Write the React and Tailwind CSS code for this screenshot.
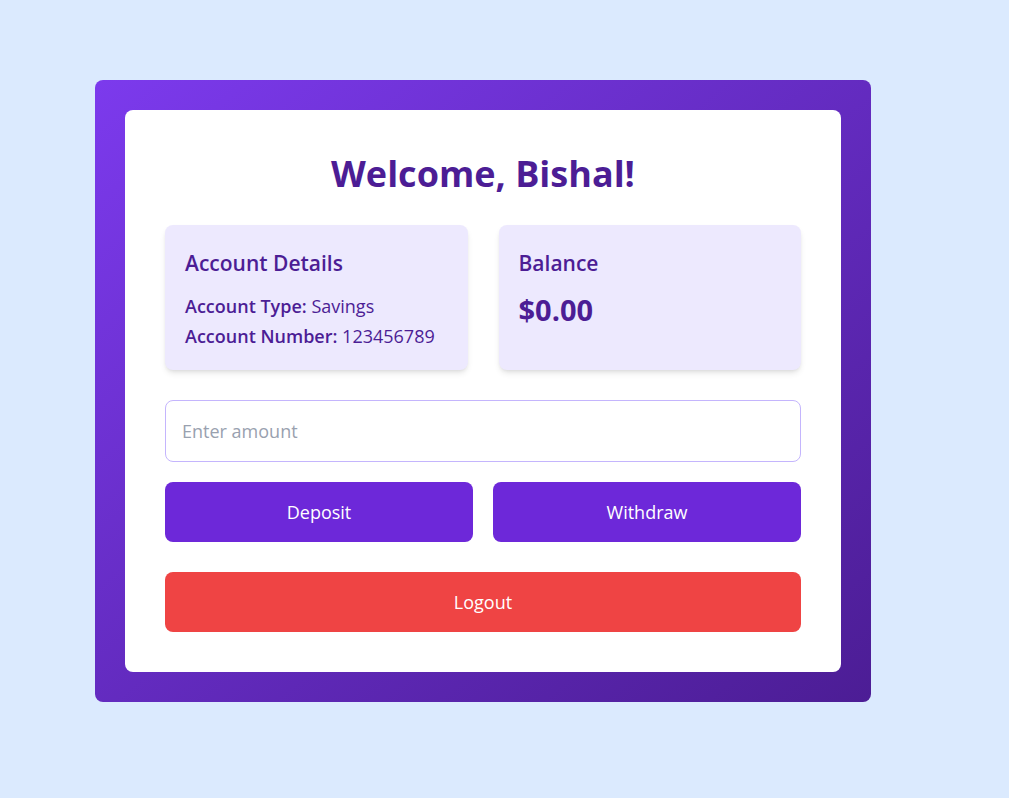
import React, { useState } from 'react';

const App = () => {
  const [amount, setAmount] = useState('');
  const balance = 0;

  return (
    <div className="min-h-screen bg-[#dbeafe] pt-[80px] pl-[95px]" style={{ fontFamily: '"Open Sans", "Noto Sans", sans-serif' }}>
      <div className="w-[776px] rounded-lg bg-gradient-to-br from-[#7c3aed] to-[#4c1d95] p-[30px]">
        <div className="rounded-lg bg-white p-10">
          <h1 className="text-center text-[36px] leading-[48px] font-bold text-[#4c1d95] mb-[27px]">Welcome, Bishal!</h1>

          <div className="grid grid-cols-2 gap-[31px] mb-[30px]">
            <div className="h-[145px] rounded-lg bg-[#ede9fe] px-5 pt-[23px] shadow-md text-[#4c1d95]">
              <h2 className="text-[21px] leading-[30px] font-semibold mb-[13px]">Account Details</h2>
              <p className="text-[18px] leading-[30px]"><span className="font-semibold">Account Type:</span> Savings</p>
              <p className="text-[18px] leading-[30px]"><span className="font-semibold">Account Number:</span> 123456789</p>
            </div>
            <div className="h-[145px] rounded-lg bg-[#ede9fe] px-5 pt-[23px] shadow-md text-[#4c1d95]">
              <h2 className="text-[21px] leading-[30px] font-semibold mb-[12px]">Balance</h2>
              <p className="text-[29px] leading-[40px] font-bold">${balance.toFixed(2)}</p>
            </div>
          </div>

          <input
            type="number"
            value={amount}
            onChange={(e) => setAmount(e.target.value)}
            placeholder="Enter amount"
            className="block w-full h-[62px] rounded-lg border border-[#c4b5fd] px-4 text-[18px] text-gray-800 placeholder:text-gray-400 outline-none mb-5"
          />

          <div className="grid grid-cols-2 gap-5 mb-[30px]">
            <button className="h-[60px] rounded-lg bg-[#6d28d9] text-white text-[18px]">Deposit</button>
            <button className="h-[60px] rounded-lg bg-[#6d28d9] text-white text-[18px]">Withdraw</button>
          </div>

          <button className="w-full h-[60px] rounded-lg bg-[#ef4444] text-white text-[18px]">Logout</button>
        </div>
      </div>
    </div>
  );
};

export default App;
